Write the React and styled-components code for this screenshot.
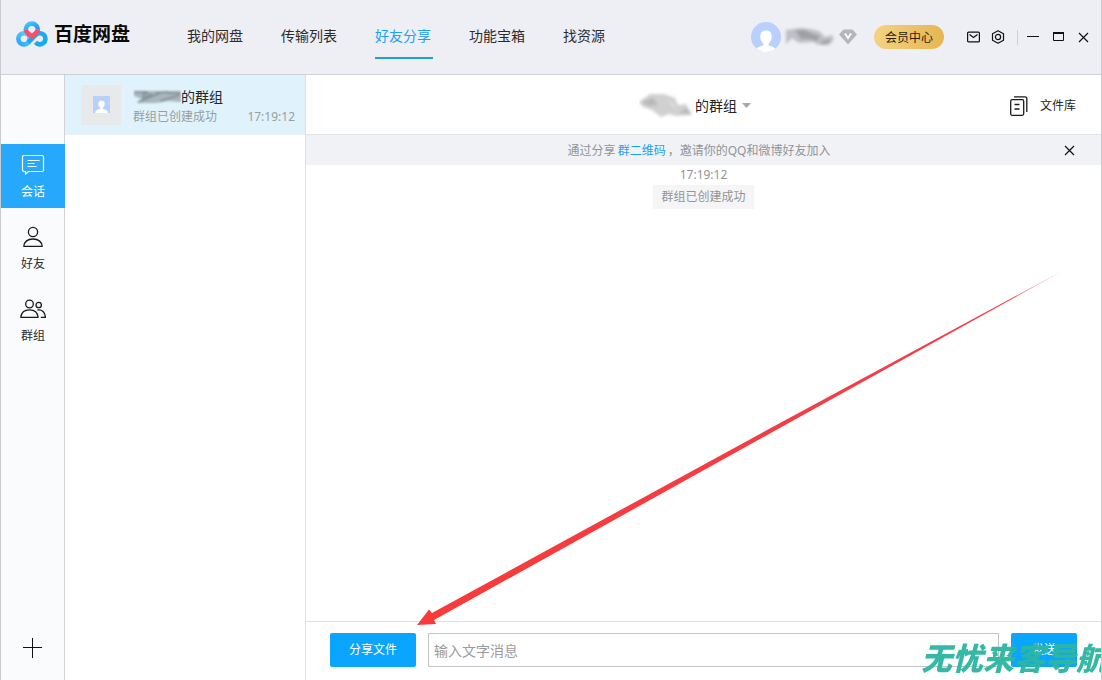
import React from 'react';
import styled, { createGlobalStyle } from 'styled-components';

const GlobalStyle = createGlobalStyle`
  * {
    box-sizing: border-box;
  }

  body {
    margin: 0;
    background: #fff;
    color: #222;
    font-family: "Noto Sans", "Noto Sans CJK SC", sans-serif;
    font-size: 12px;
    line-height: 20px;
  }

  button,
  input {
    font: inherit;
    color: inherit;
  }

  button {
    padding: 0;
    border: 0;
    background: none;
    cursor: pointer;
  }

  svg {
    display: block;
    flex: none;
  }
`;

const Window = styled.div`
  position: relative;
  display: flex;
  flex-direction: column;
  min-height: 100vh;
  overflow: hidden;
  border: solid #c9cacd;
  border-width: 0 1px;
`;

const Header = styled.header`
  display: flex;
  align-items: center;
  height: 75px;
  padding: 0 12px 0 15px;
  background: #eeeff5;
  border-bottom: 1px solid #d0d1d6;
`;

const Logo = styled.div`
  display: flex;
  align-items: center;
  gap: 6px;
  height: 68px;
  align-self: flex-start;
  color: #0a0a0a;
  font-size: 19px;
  font-weight: 700;
`;

const Nav = styled.nav`
  display: flex;
  gap: 38px;
  height: 72px;
  align-items: center;
  align-self: flex-start;
  margin-left: 57px;
`;

const NavLink = styled.a`
  position: relative;
  color: ${(p) => (p.$active ? '#1ea0f5' : '#2b2b2e')};
  font-size: 14px;
  text-decoration: none;
  white-space: nowrap;

  &::after {
    content: '';
    display: ${(p) => (p.$active ? 'block' : 'none')};
    position: absolute;
    left: 0;
    right: -2px;
    bottom: -13px;
    height: 2px;
    background: #1ba2dc;
  }
`;

const Account = styled.div`
  display: flex;
  align-items: center;
  margin-left: auto;
`;

const VipButton = styled.button`
  width: 70px;
  height: 24px;
  margin: 0 23px 0 17px;
  padding-top: 2px;
  border-radius: 12px;
  background: linear-gradient(90deg, #f5d283, #e5b653);
  color: #2b1d05;
`;

const WindowTools = styled.div`
  display: flex;
  align-items: center;
  gap: ${(p) => p.$gap}px;
`;

const Divider = styled.span`
  width: 1px;
  height: 15px;
  margin: 0 9px 0 12px;
  background: #cfd0d5;
`;

const Body = styled.div`
  display: flex;
  flex: 1;
`;

const Sidebar = styled.aside`
  display: flex;
  flex-direction: column;
  gap: 8px;
  width: 64px;
  padding: 69px 0 22px;
  background: #f9fbfd;
  border-right: 1px solid #d2d3d6;
`;

const SideButton = styled.button`
  display: flex;
  flex-direction: column;
  align-items: center;
  gap: 6px;
  height: 64px;
  margin-right: -1px;
  padding-top: 10px;
  background: ${(p) => (p.$active ? '#26a8fc' : 'transparent')};
  color: ${(p) => (p.$active ? '#fff' : '#2b2b2e')};
`;

const AddButton = styled.button`
  align-self: center;
  margin-top: auto;
`;

const ChatList = styled.section`
  width: 241px;
  border-right: 1px solid #dfe0e3;
`;

const ChatItem = styled.div`
  display: flex;
  align-items: center;
  gap: 12px;
  height: 60px;
  padding: 0 10px 0 16px;
  background: #e0f2fb;
  border-bottom: 1px solid #e6f0f5;
`;

const GroupAvatar = styled.div`
  display: flex;
  align-items: center;
  justify-content: center;
  width: 40px;
  height: 40px;
  background: #e8e9ea;
`;

const ChatInfo = styled.div`
  flex: 1;
  padding-top: 5px;
`;

const ChatName = styled.div`
  display: flex;
  align-items: center;
  color: #22262b;
  font-size: 14px;
`;

const ChatMeta = styled.div`
  display: flex;
  justify-content: space-between;
  color: #989ea2;
`;

const Main = styled.main`
  position: relative;
  display: flex;
  flex: 1;
  flex-direction: column;
  min-width: 0;
`;

const ChatHeader = styled.div`
  display: grid;
  grid-template-columns: 1fr auto 1fr;
  align-items: center;
  height: 60px;
  padding: 2px 25px 0 8px;
  border-bottom: 1px solid #e2e3e6;
`;

const GroupTitle = styled.button`
  display: flex;
  grid-column: 2;
  align-items: center;
  font-size: 14px;
`;

const LibraryButton = styled.button`
  display: flex;
  align-items: center;
  justify-self: end;
  gap: 12px;
`;

const Notice = styled.div`
  display: flex;
  align-items: center;
  height: 30px;
  padding: 0 26px 0 28px;
  background: #f1f2f6;
  color: #929497;

  p {
    flex: 1;
    margin: 0;
    padding-top: 2px;
    text-align: center;
  }

  a {
    margin: 0 2px;
    color: #18a2f5;
    text-decoration: none;
  }
`;

const Messages = styled.div`
  display: flex;
  flex: 1;
  flex-direction: column;
  align-items: center;
  color: #929497;
`;

const SystemMessage = styled.div`
  padding: 2px 8px;
  background: #f5f5f5;
`;

const Composer = styled.form`
  display: flex;
  gap: 12px;
  padding: 11px 24px 13px;
  border-top: 1px solid #dfe0e3;
`;

const BlueButton = styled.button`
  width: ${(p) => p.$width}px;
  height: 34px;
  border-radius: 2px;
  background: #09a5ff;
  color: #fff;
`;

const MessageInput = styled.input`
  flex: 1;
  min-width: 0;
  height: 34px;
  padding: 0 5px;
  border: 1px solid #c4c4c8;
  border-radius: 0;
  font-size: 14px;

  &::placeholder {
    color: #9a9a9c;
    opacity: 1;
  }
`;

const PointerArrow = styled.svg`
  position: absolute;
  left: 111px;
  bottom: 54px;
  pointer-events: none;
`;

const Watermark = styled.div`
  position: absolute;
  right: -6px;
  bottom: 2px;
  color: #2cb6a0;
  font-size: 31px;
  font-style: italic;
  font-weight: 900;
  line-height: 40px;
  white-space: nowrap;
  opacity: 0.95;
  pointer-events: none;
`;

function LogoMark() {
  return (
    <svg width="32" height="26" viewBox="0 0 32 26" fill="none" strokeWidth="4.600">
      <defs>
        <linearGradient id="ringLeft" x1="0" y1="1" x2="1" y2="0">
          <stop offset="0" stopColor="#2aa8f5" />
          <stop offset="1" stopColor="#5cd8fb" />
        </linearGradient>
        <linearGradient id="ringTop" x1="0" y1="0" x2="1" y2="1">
          <stop offset="0" stopColor="#3ccaf5" />
          <stop offset="1" stopColor="#2d8ef5" />
        </linearGradient>
      </defs>
      <circle cx="8" cy="17.800" r="5.600" stroke="url(#ringLeft)" />
      <path d="M19.500 21.300a5.600 5.600 0 1 0 .6-7.700L12 21.500" stroke="#1ba9f7" />
      <path d="M9.800 8.600a6 6 0 0 1 12 0" stroke="url(#ringTop)" />
      <path d="M9.800 8.200c0 3.200 3 4.800 6 7.400 3-2.600 6-4.200 6-7.400" stroke="#f5506f" strokeLinejoin="round" />
    </svg>
  );
}

function UserAvatar() {
  return (
    <svg width="30" height="30" viewBox="0 0 30 30">
      <defs>
        <clipPath id="avatarClip"><circle cx="15" cy="15" r="15" /></clipPath>
      </defs>
      <g clipPath="url(#avatarClip)">
        <rect width="30" height="30" fill="#b9cffc" />
        <path d="M15 8.500c-4 0-5.800 2.700-5.800 6.200 0 3.200 1.600 5.400 3.200 6.800v2c-3 .8-6.400 1.500-7.900 4.500V30h21v-2c-1.500-3-4.900-3.700-7.900-4.500v-2c1.600-1.400 3.200-3.600 3.200-6.800 0-3.500-1.800-6.200-5.800-6.200z" fill="#fff" />
      </g>
    </svg>
  );
}

function SmudgedName() {
  return (
    <svg width="58" height="30" viewBox="1 0 58 30">
      <defs>
        <filter id="smudgeA"><feGaussianBlur stdDeviation="1.500" /></filter>
      </defs>
      <g filter="url(#smudgeA)">
        <path d="M6 8l15-2 9 1 9 2 6 6 7-2 2 4-5 6H39l-6-3-14 1-7-5-6 6z" fill="#bfc0c4" />
        <path d="M15 8l10 0 8 4 7 2-3 5-8-2-8 0z" fill="#9fa0a4" />
        <path d="M40 20l9-3 2 3-8 3z" fill="#a2a3a7" />
      </g>
    </svg>
  );
}

function VipBadge() {
  return (
    <svg width="18" height="16" viewBox="0 0 18 16">
      <path d="M4.500 .5h9L18 5.500l-9 10L0 5.500z" fill="#b5b6b9" />
      <path d="M6 4.500l3 4.500 3-4.500" fill="none" stroke="#fff" strokeWidth="2" />
    </svg>
  );
}

function MailIcon() {
  return (
    <svg width="13" height="12" viewBox="0 0 13 12" fill="none" stroke="#111" strokeWidth="1.200">
      <rect x=".6" y="1.100" width="11.800" height="9.800" rx="1" />
      <path d="M2.500 3.500l4 3 4-3" />
    </svg>
  );
}

function SettingsIcon() {
  return (
    <svg width="14" height="14" viewBox="0 0 14 14" fill="none" stroke="#111" strokeWidth="1.200">
      <path d="M7 .8l5.500 3v6.400l-5.500 3-5.500-3V3.800z" strokeLinejoin="round" />
      <circle cx="7" cy="7" r="2.600" />
    </svg>
  );
}

function MinimizeIcon() {
  return (
    <svg width="12" height="12" viewBox="0 0 12 12">
      <path d="M0 5h12v1H0z" fill="#111" />
    </svg>
  );
}

function MaximizeIcon() {
  return (
    <svg width="11" height="10" viewBox="0 0 11 10" fill="none" stroke="#111">
      <path d="M.5 1v7.500h10V1" />
      <path d="M0 1h11" strokeWidth="2" />
    </svg>
  );
}

function CloseIcon() {
  return (
    <svg width="11" height="11" viewBox="0 0 11 11" stroke="#111" strokeWidth="1.200">
      <path d="M1 1l9 9M10 1l-9 9" />
    </svg>
  );
}

function ChatIcon() {
  return (
    <svg width="24" height="22" viewBox="0 0 24 22" fill="none" stroke="#fff" strokeWidth="1.200">
      <path d="M3 1.500h18a1.500 1.500 0 0 1 1.500 1.500v13a1.500 1.500 0 0 1-1.500 1.500H7.500L4.500 20v-2.500H3A1.500 1.500 0 0 1 1.500 16V3A1.500 1.500 0 0 1 3 1.500z" />
      <path d="M6.500 6.500h12M6.500 9.500h7M6.500 12.500h9" />
    </svg>
  );
}

function FriendIcon() {
  return (
    <svg width="24" height="22" viewBox="0 0 24 22" fill="none" stroke="#1a1a1a" strokeWidth="1.300">
      <circle cx="12" cy="6" r="4.600" />
      <path d="M2.800 20.300c.6-4.600 4.300-7.300 9.200-7.300s8.600 2.700 9.200 7.300z" strokeLinejoin="round" />
    </svg>
  );
}

function GroupIcon() {
  return (
    <svg width="26" height="22" viewBox="0 0 26 22" fill="none" stroke="#1a1a1a" strokeWidth="1.300">
      <circle cx="9.500" cy="6" r="3.800" />
      <path d="M.8 19.300c.4-4.600 3.600-7.500 8.700-7.500s8.200 2.900 8.600 7.500z" strokeLinejoin="round" />
      <circle cx="18.700" cy="7" r="2.700" />
      <path d="M17.500 12c4.600-.6 7.700 2 7.900 7.300h-4.600" />
    </svg>
  );
}

function PlusIcon() {
  return (
    <svg width="20" height="20" viewBox="0 0 20 20">
      <path d="M0 9h19v1H10v10H9V10H0zM9 0h1v10H9z" fill="#111" />
    </svg>
  );
}

function ContactIcon() {
  return (
    <svg width="17" height="17" viewBox="0 0 17 17">
      <rect width="17" height="17" fill="#b9cffc" />
      <path d="M8.500 4.500C6.500 4.500 5.300 6 5.300 8c0 1.700.9 2.900 1.900 3.700v1.200c-1.800.5-3.900.8-4.900 2.700V17h12.400v-1.400c-1-1.900-3.100-2.200-4.900-2.700v-1.200c1-.8 1.900-2 1.900-3.700 0-2-1.200-3.500-3.200-3.500z" fill="#fff" />
    </svg>
  );
}

function ListSmudge() {
  return (
    <svg width="48" height="18" viewBox="0 0 48 18">
      <defs>
        <filter id="smudgeB"><feGaussianBlur stdDeviation="1" /></filter>
      </defs>
      <g filter="url(#smudgeB)">
        <path d="M1 3h47v11l-13-1-12 2-19 0 5-4-8-3z" fill="#a9b6bc" />
        <path d="M1 4h14l-6 3M5 14l22-9M23 5l12-1M27 13l20-6M34 5h13M9 10l10-4" stroke="#7d8a91" strokeWidth="1.500" fill="none" />
      </g>
    </svg>
  );
}

function TitleSmudge() {
  return (
    <svg width="56" height="30" viewBox="1 0 56 30">
      <defs>
        <filter id="smudgeC"><feGaussianBlur stdDeviation="1.500" /></filter>
      </defs>
      <g filter="url(#smudgeC)">
        <path d="M1 11l11-8 14 0 11 4 3 7 8-1 6 11-16 1-7-2-8 3-9-7-9-3z" fill="#d0d0d1" />
        <path d="M3 11l12-4 5 7-9 1zM41 22l8-5 4 6z" fill="#b8b8b9" />
        <path d="M29 9l6 4 3 5-4-4z" fill="#eee" />
      </g>
    </svg>
  );
}

function CaretDown() {
  return (
    <svg width="14" height="8" viewBox="0 0 14 8">
      <path d="M5 1h9L9.500 6z" fill="#a5a6a9" />
    </svg>
  );
}

function FilesIcon() {
  return (
    <svg width="18" height="20" viewBox="0 0 18 20" fill="none" stroke="#1a1a1a" strokeWidth="1.300">
      <rect x=".7" y="3.700" width="13" height="15.600" rx="1.500" />
      <path d="M4 .8h11a1.800 1.800 0 0 1 1.800 1.800V16M4.500 8.500h5M4.500 13h5" />
    </svg>
  );
}

function App() {
  return (
    <>
      <GlobalStyle />
      <Window>
        <Header>
          <Logo>
            <LogoMark />
            百度网盘
          </Logo>
          <Nav>
            <NavLink href="#disk">我的网盘</NavLink>
            <NavLink href="#transfer">传输列表</NavLink>
            <NavLink href="#share" $active>好友分享</NavLink>
            <NavLink href="#tools">功能宝箱</NavLink>
            <NavLink href="#resources">找资源</NavLink>
          </Nav>
          <Account>
            <UserAvatar />
            <SmudgedName />
            <VipBadge />
            <VipButton>会员中心</VipButton>
            <WindowTools $gap={11}>
              <button aria-label="消息"><MailIcon /></button>
              <button aria-label="设置"><SettingsIcon /></button>
            </WindowTools>
            <Divider />
            <WindowTools $gap={14}>
              <button aria-label="最小化"><MinimizeIcon /></button>
              <button aria-label="最大化"><MaximizeIcon /></button>
              <button aria-label="关闭"><CloseIcon /></button>
            </WindowTools>
          </Account>
        </Header>

        <Body>
          <Sidebar>
            <SideButton $active>
              <ChatIcon />
              会话
            </SideButton>
            <SideButton>
              <FriendIcon />
              好友
            </SideButton>
            <SideButton>
              <GroupIcon />
              群组
            </SideButton>
            <AddButton aria-label="添加"><PlusIcon /></AddButton>
          </Sidebar>

          <ChatList>
            <ChatItem>
              <GroupAvatar><ContactIcon /></GroupAvatar>
              <ChatInfo>
                <ChatName>
                  <ListSmudge />
                  的群组
                </ChatName>
                <ChatMeta>
                  <span>群组已创建成功</span>
                  <time>17:19:12</time>
                </ChatMeta>
              </ChatInfo>
            </ChatItem>
          </ChatList>

          <Main>
            <ChatHeader>
              <GroupTitle>
                <TitleSmudge />
                的群组
                <CaretDown />
              </GroupTitle>
              <LibraryButton>
                <FilesIcon />
                文件库
              </LibraryButton>
            </ChatHeader>
            <Notice>
              <p>
                通过分享<a href="#qrcode">群二维码</a>，邀请你的QQ和微博好友加入
              </p>
              <button aria-label="关闭提示"><CloseIcon /></button>
            </Notice>
            <Messages>
              <time>17:19:12</time>
              <SystemMessage>群组已创建成功</SystemMessage>
            </Messages>
            <Composer onSubmit={(e) => e.preventDefault()}>
              <BlueButton type="button" $width={86}>分享文件</BlueButton>
              <MessageInput aria-label="文字消息" placeholder="输入文字消息" />
              <BlueButton type="submit" $width={66}>发送</BlueButton>
            </Composer>
            <PointerArrow width="650" height="357" viewBox="0 0 650 357">
              <defs>
                <linearGradient id="arrowFade" x1="0" x2="1">
                  <stop offset="0" stopColor="#f83a3a" />
                  <stop offset=".93" stopColor="#f0404c" />
                  <stop offset="1" stopColor="#f0404c" stopOpacity=".5" />
                </linearGradient>
              </defs>
              <path d="M0 356l12-15.500 3 3.500L350 161 649 0 352 165 17 351l2 4z" fill="url(#arrowFade)" />
            </PointerArrow>
          </Main>
        </Body>
        <Watermark>无忧来客导航</Watermark>
      </Window>
    </>
  );
}

export default App;
